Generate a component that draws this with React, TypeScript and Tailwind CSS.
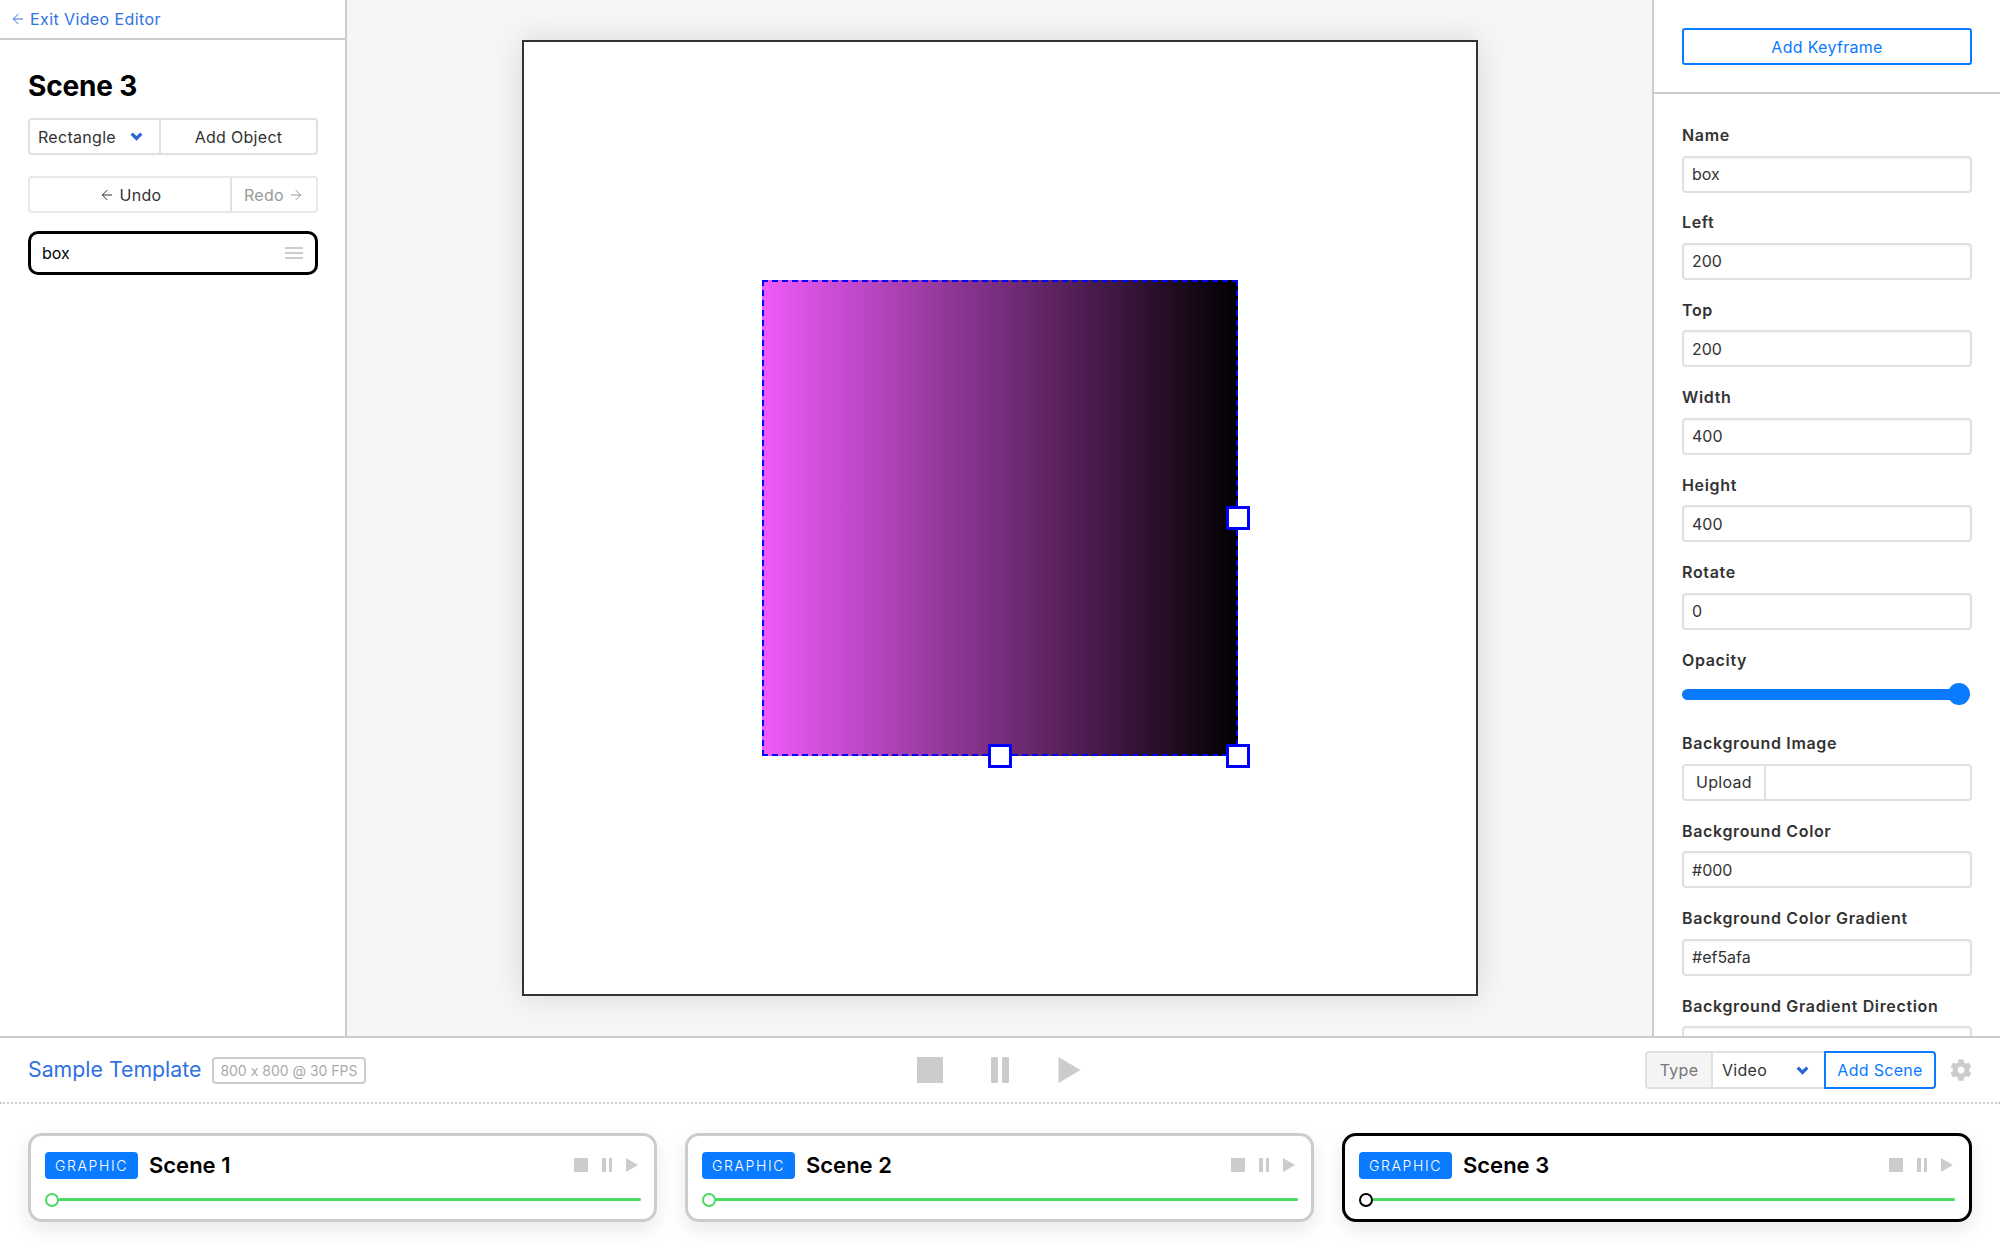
import React from "react";
import { ArrowLeft, ArrowRight } from "lucide-react";
import { FaCog } from "react-icons/fa";

const Chevron = () => (
  <svg viewBox="0 0 13 9" className="h-[9px] w-[13px] shrink-0">
    <path d="M1.7 1.7 L6.5 6.5 L11.3 1.7" fill="none" stroke="#2766d6" strokeWidth="3.2" />
  </svg>
);

const Field = ({ label, value }: { label: string; value: string }) => (
  <div className="mb-[17.95px]">
    <div className="h-[24px] text-[16px] leading-[24px] font-semibold text-[#333] tracking-[0.65px]">{label}</div>
    <input
      readOnly
      value={value}
      className="mt-[8.5px] block h-[37px] w-full rounded-[4px] border-2 border-[#e0e0e0] bg-white px-[8px] text-[16px] text-[#333] shadow-[inset_0_1px_2px_rgba(0,0,0,0.05)] outline-none"
    />
  </div>
);

const Stop = ({ s }: { s: number }) => (
  <div className="bg-[#cccccc]" style={{ width: s, height: s }} />
);

const SceneCard = ({ name, active }: { name: string; active?: boolean }) => (
  <div
    className={`h-[89px] rounded-[14px] border-[3px] bg-white px-[14px] pt-[16px] shadow-[0_8px_20px_rgba(0,0,0,0.09)] ${
      active ? "flex-1 border-black" : "w-[629px] shrink-0 border-[#cccccc]"
    }`}
  >
    <div className="flex h-[27px] items-center">
      <span className="flex h-[27px] w-[93px] items-center justify-center rounded-[4px] bg-[#0a7aff] text-[14px] font-light tracking-[1.6px] text-white">
        GRAPHIC
      </span>
      <span className="ml-[11px] text-[22px] leading-[27px] font-semibold text-black">{name}</span>
      <div className="ml-auto mr-[2px] flex items-center">
        <Stop s={14} />
        <div className="ml-[14px] flex h-[14px] gap-[3px]">
          <div className="w-[3.5px] bg-[#cccccc]" />
          <div className="w-[3.5px] bg-[#cccccc]" />
        </div>
        <svg viewBox="0 0 12 14" className="ml-[14px] h-[14px] w-[12px]">
          <path d="M0 0 L12 7 L0 14 Z" fill="#cccccc" />
        </svg>
      </div>
    </div>
    <div className={`mt-[14px] flex h-[14px] items-center ${active ? "" : "-mr-[1px]"}`}>
      <div
        className={`h-[14px] w-[14px] shrink-0 rounded-full border-2 bg-white ${
          active ? "border-black" : "border-[#4cd964]"
        }`}
      />
      <div className="h-[3px] flex-1 rounded-r-full bg-[#4cd964]" />
    </div>
  </div>
);

export default function App() {
  return (
    <div className="flex h-[1250px] w-[2000px] flex-col overflow-hidden bg-white font-['Inter',sans-serif] text-[16px] text-[#333] [font-feature-settings:'calt'_0]">
      <div className="flex h-[1036px] shrink-0">
        {/* Left sidebar */}
        <aside className="w-[347px] shrink-0 border-r-2 border-[#cccccc] bg-white">
          <div className="flex h-[40px] items-center border-b-2 border-[#cccccc] pl-[10px] text-[16px] text-[#2f72e0]">
            <ArrowLeft size={16} strokeWidth={1.5} />
            <span className="ml-[4px] tracking-[0.4px]">Exit Video Editor</span>
          </div>
          <div className="pl-[28px] pr-[27px]">
            <h1 className="mt-[26px] text-[28px] leading-[40px] font-bold tracking-[-0.15px] text-black">Scene 3</h1>
            <div className="mt-[12px] flex h-[37px] rounded-[4px] border-2 border-[#e0e0e0]">
              <div className="flex w-[129px] items-center justify-between pl-[8px] pr-[16px] text-[#333]">
                <span className="tracking-[0.3px]">Rectangle</span>
                <Chevron />
              </div>
              <div className="flex flex-1 items-center justify-center border-l-2 border-[#e0e0e0] tracking-[0.3px]">
                Add Object
              </div>
            </div>
            <div className="mt-[21px] flex h-[37px] rounded-[4px] border-2 border-[#e8e8e8]">
              <div className="flex w-[200px] items-center justify-center gap-[5px] text-[#333]">
                <ArrowLeft size={16} strokeWidth={1.5} />
                <span className="tracking-[0.3px]">Undo</span>
              </div>
              <div className="flex flex-1 items-center justify-center gap-[4px] border-l-2 border-[#e0e0e0] text-[#999]">
                <span className="tracking-[0.3px]">Redo</span>
                <ArrowRight size={16} strokeWidth={1.5} />
              </div>
            </div>
            <div className="mt-[18px] flex h-[44px] items-center justify-between rounded-[10px] border-[3px] border-black pl-[11px] pr-[12px] text-black">
              <span>box</span>
              <div className="flex w-[18px] flex-col gap-[3px]">
                <div className="h-[2px] bg-[#cccccc]" />
                <div className="h-[2px] bg-[#cccccc]" />
                <div className="h-[2px] bg-[#cccccc]" />
              </div>
            </div>
          </div>
        </aside>

        {/* Centre stage */}
        <main className="flex flex-1 items-center justify-center bg-[#f6f6f6]">
          <div className="relative h-[956px] w-[956px] border-2 border-[#333] bg-white shadow-[0_0_30px_rgba(0,0,0,0.13)]">
            <div className="absolute left-[238px] top-[238px] h-[476px] w-[476px] border-2 border-dashed border-[#0000ff] bg-linear-to-r/srgb from-[#ef5afa] to-black bg-origin-border" />
            <div className="absolute left-[702px] top-[464px] h-[24px] w-[24px] border-[3px] border-[#0000ff] bg-white" />
            <div className="absolute left-[464px] top-[702px] h-[24px] w-[24px] border-[3px] border-[#0000ff] bg-white" />
            <div className="absolute left-[702px] top-[702px] h-[24px] w-[24px] border-[3px] border-[#0000ff] bg-white" />
          </div>
        </main>

        {/* Right panel */}
        <aside className="w-[348px] shrink-0 overflow-hidden border-l-2 border-[#cccccc] bg-white">
          <div className="flex h-[94px] items-start border-b-2 border-[#cccccc] px-[28px] pt-[28px]">
            <div className="flex h-[37px] w-full items-center justify-center rounded-[3px] border-2 border-[#0a7aff] text-[#0a7aff] tracking-[0.3px]">
              Add Keyframe
            </div>
          </div>
          <div className="px-[28px] pt-[29px]">
            <Field label="Name" value="box" />
            <Field label="Left" value="200" />
            <Field label="Top" value="200" />
            <Field label="Width" value="400" />
            <Field label="Height" value="400" />
            <Field label="Rotate" value="0" />
            <div className="mb-[26px]">
              <div className="h-[24px] leading-[24px] font-semibold text-[#333] tracking-[0.65px]">Opacity</div>
              <div className="mt-[11.6px] flex h-[22px] items-center">
                <div className="h-[11px] flex-1 rounded-l-full bg-[#0a7aff]" />
                <div className="-ml-[4px] h-[22px] w-[22px] shrink-0 rounded-full bg-[#0a7aff]" />
                <div className="w-[2px] shrink-0" />
              </div>
            </div>
            <div className="mb-[17.95px]">
              <div className="h-[24px] leading-[24px] font-semibold text-[#333] tracking-[0.65px]">Background Image</div>
              <div className="mt-[8.5px] flex h-[37px] rounded-[4px] border-2 border-[#e0e0e0] bg-white">
                <div className="flex w-[82px] items-center justify-center border-r-2 border-[#e0e0e0] tracking-[0.3px]">Upload</div>
              </div>
            </div>
            <Field label="Background Color" value="#000" />
            <Field label="Background Color Gradient" value="#ef5afa" />
            <Field label="Background Gradient Direction" value="" />
          </div>
        </aside>
      </div>

      {/* Bottom bar */}
      <div className="relative flex h-[68px] shrink-0 items-center justify-between border-y-2 border-t-[#cccccc] border-b-[#cccccc] [border-bottom-style:dotted] px-[28px]">
        <div className="flex w-[600px] items-center">
          <span className="text-[21.3px] text-[#2f72e0]">Sample Template</span>
          <span className="ml-[11px] flex h-[27px] items-center rounded-[4px] border-2 border-[#cccccc] px-[6px] text-[14px] text-[#aaa]">
            800 x 800 @ 30 FPS
          </span>
        </div>
        <div className="absolute left-[917px] flex items-center">
          <Stop s={26} />
          <div className="ml-[48px] flex h-[26px] gap-[4px]">
            <div className="w-[7px] rounded-[1px] bg-[#cccccc]" />
            <div className="w-[7px] rounded-[1px] bg-[#cccccc]" />
          </div>
          <svg viewBox="0 0 22 26" className="ml-[49px] h-[26px] w-[23px]">
            <path d="M0 0 L22 13 L0 26 Z" fill="#cccccc" />
          </svg>
        </div>
        <div className="flex items-center">
          <div className="flex h-[38px] items-stretch">
            <div className="flex w-[66px] items-center justify-center rounded-l-[4px] border-2 border-r-0 border-[#e0e0e0] bg-[#f4f4f4] text-[#777] tracking-[0.3px]">Type</div>
            <div className="flex w-[113px] items-center justify-between border-y-2 border-l-2 border-[#e0e0e0] pl-[9px] pr-[15px] tracking-[0.3px]">
              Video
              <Chevron />
            </div>
            <div className="flex w-[112px] items-center justify-center rounded-r-[4px] border-2 border-[#0a7aff] text-[#0a7aff] tracking-[0.3px]">Add Scene</div>
          </div>
          <FaCog size={22} color="#cccccc" className="ml-[14px]" />
        </div>
      </div>

      <div className="flex gap-[28px] px-[28px] pt-[28.5px]">
        <SceneCard name="Scene 1" />
        <SceneCard name="Scene 2" />
        <SceneCard name="Scene 3" active />
      </div>
    </div>
  );
}
